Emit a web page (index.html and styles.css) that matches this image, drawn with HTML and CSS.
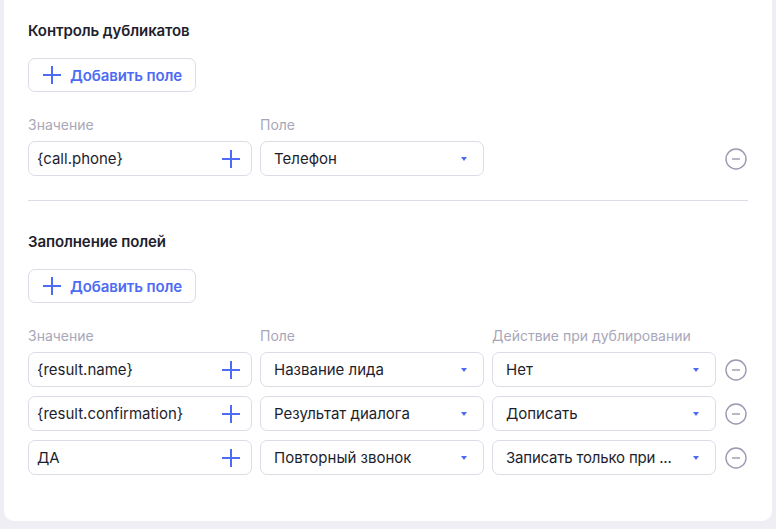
FILE: index.html
```html
<!DOCTYPE html>
<html lang="ru">
<head>
<meta charset="utf-8">
<link rel="stylesheet" href="styles.css">
</head>
<body>
<div class="card">
  <section class="section">
    <h2 class="title">Контроль дубликатов</h2>
    <button class="add-btn"><svg class="plus-lg" viewBox="0 0 18 18"><path d="M9 0V18M0 9H18"/></svg><span>Добавить поле</span></button>
    <div class="grid">
      <div class="label">Значение</div>
      <div class="label">Поле</div>
      <div></div>
      <div></div>

      <div class="input"><span class="val">{call.phone}</span><svg class="plus" viewBox="0 0 18 18"><path d="M9 0V18M0 9H18"/></svg></div>
      <div class="select"><span class="val">Телефон</span><i class="caret"></i></div>
      <div></div>
      <div class="remove"><svg viewBox="0 0 22 22"><circle cx="11" cy="11" r="10"/><path d="M7 11H15"/></svg></div>
    </div>
  </section>

  <hr class="divider">

  <section class="section">
    <h2 class="title">Заполнение полей</h2>
    <button class="add-btn"><svg class="plus-lg" viewBox="0 0 18 18"><path d="M9 0V18M0 9H18"/></svg><span>Добавить поле</span></button>
    <div class="grid">
      <div class="label">Значение</div>
      <div class="label">Поле</div>
      <div class="label">Действие при дублировании</div>
      <div></div>

      <div class="input"><span class="val">{result.name}</span><svg class="plus" viewBox="0 0 18 18"><path d="M9 0V18M0 9H18"/></svg></div>
      <div class="select"><span class="val">Название лида</span><i class="caret"></i></div>
      <div class="select"><span class="val">Нет</span><i class="caret"></i></div>
      <div class="remove"><svg viewBox="0 0 22 22"><circle cx="11" cy="11" r="10"/><path d="M7 11H15"/></svg></div>

      <div class="input"><span class="val">{result.confirmation}</span><svg class="plus" viewBox="0 0 18 18"><path d="M9 0V18M0 9H18"/></svg></div>
      <div class="select"><span class="val">Результат диалога</span><i class="caret"></i></div>
      <div class="select"><span class="val">Дописать</span><i class="caret"></i></div>
      <div class="remove"><svg viewBox="0 0 22 22"><circle cx="11" cy="11" r="10"/><path d="M7 11H15"/></svg></div>

      <div class="input"><span class="val">ДА</span><svg class="plus" viewBox="0 0 18 18"><path d="M9 0V18M0 9H18"/></svg></div>
      <div class="select"><span class="val">Повторный звонок</span><i class="caret"></i></div>
      <div class="select"><span class="val tight">Записать только при ...</span><i class="caret"></i></div>
      <div class="remove"><svg viewBox="0 0 22 22"><circle cx="11" cy="11" r="10"/><path d="M7 11H15"/></svg></div>
    </div>
  </section>
</div>
</body>
</html>
```

FILE: styles.css
```css
* { box-sizing: border-box; }
html, body { margin: 0; padding: 0; }
body {
  background: #efeef4;
  font-family: "Inter", "Noto Sans", sans-serif;
  color: #1e1e2d;
  width: 776px;
  height: 529px;
  overflow: hidden;
}
.card {
  margin: -10px 4px 0 4px;
  background: #ffffff;
  border-radius: 0 0 10px 10px;
  padding: 31px 24px 46px 24px;
}
.title {
  margin: 0;
  font-size: 15px;
  font-weight: 600;
  line-height: 20px;
  letter-spacing: -0.1px;
  color: #1e1e2d;
}
.add-btn {
  margin-top: 17px;
  display: flex;
  align-items: center;
  gap: 9px;
  height: 34px;
  padding: 0 12px 0 14px;
  width: 168px;
  white-space: nowrap;
  border: 1px solid #dcdbe6;
  border-radius: 7px;
  background: #fff;
  font-family: inherit;
  font-size: 15px;
  font-weight: 600;
  color: #4d6bf5;
  letter-spacing: -0.1px;
}
.plus-lg, .plus {
  width: 18px;
  height: 18px;
  flex: none;
}
.plus-lg path, .plus path {
  stroke: #4d6bf5;
  stroke-width: 2;
  fill: none;
}
.grid {
  margin-top: 25px;
  display: grid;
  grid-template-columns: 224px 224px 224px 1fr;
  column-gap: 8px;
  row-gap: 9px;
  align-items: center;
}
.label {
  font-size: 14px;
  color: #a8a7b9;
  line-height: 16px;
  margin-bottom: -1px;
}
.input, .select {
  height: 35px;
  border: 1px solid #dcdbe6;
  border-radius: 7px;
  display: flex;
  align-items: center;
  justify-content: space-between;
  font-size: 15px;
  color: #1e1e2d;
  min-width: 0;
}
.input { padding: 0 11px 0 8px; }
.select { padding: 0 16px 0 13px; }
.val {
  white-space: nowrap;
  overflow: hidden;
  text-overflow: ellipsis;
  min-width: 0;
}
.val.tight { letter-spacing: -0.2px; }
.caret {
  flex: none;
  width: 0;
  height: 0;
  border-left: 3px solid transparent;
  border-right: 3px solid transparent;
  border-top: 4px solid #4d6bf5;
  margin-left: 8px;
}
.remove {
  display: flex;
  justify-content: flex-end;
  padding-right: 1px;
}
.remove svg { width: 22px; height: 22px; }
.remove circle, .remove path {
  fill: none;
  stroke: #9a98b0;
  stroke-width: 1.4;
}
.divider {
  margin: 24px 0 31px 0;
  border: 0;
  border-top: 1px solid #dcdbe6;
}
```
